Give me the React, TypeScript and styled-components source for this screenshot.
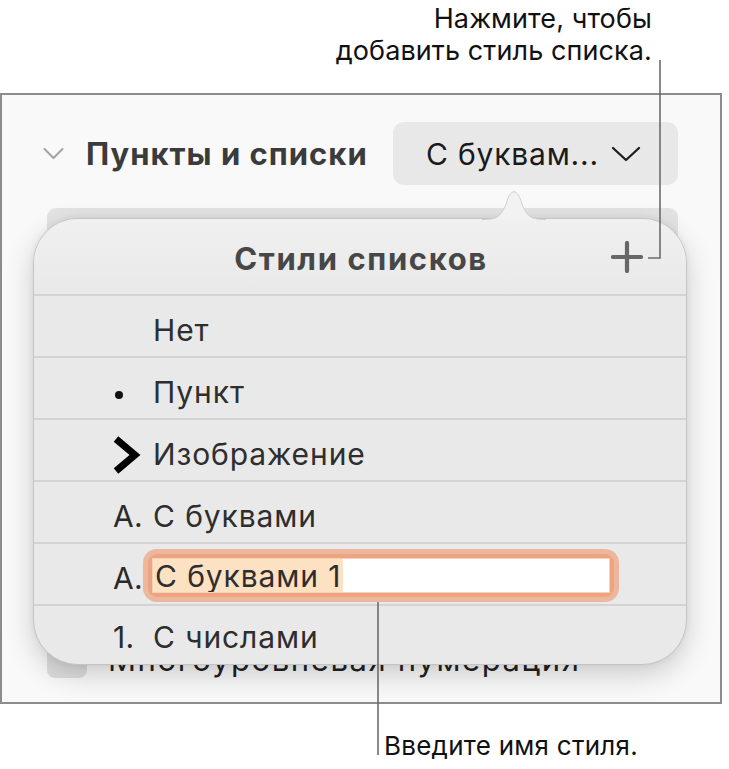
import React from "react";
import styled, { createGlobalStyle } from "styled-components";

const Global = createGlobalStyle`
  html, body { margin: 0; padding: 0; background: #ffffff; }
  body { font-family: Inter, "Noto Sans", sans-serif; -webkit-font-smoothing: antialiased; }
  #root { width: 729px; height: 769px; }
`;

const Page = styled.div`
  position: relative;
  width: 729px;
  height: 769px;
  overflow: hidden;
  display: flex;
  flex-direction: column;
`;

const CalloutTop = styled.div`
  height: 93px;
  box-sizing: border-box;
  padding: 3px 77px 0 0;
  text-align: right;
  font-size: 27px;
  line-height: 32px;
  color: #111;
  letter-spacing: 0.1px;
`;

const CalloutBottom = styled.div`
  padding: 26px 0 0 384px;
  font-size: 26px;
  line-height: 32px;
  color: #111;
  letter-spacing: 0.25px;
`;

const Panel = styled.div`
  position: relative;
  width: 722px;
  height: 611px;
  box-sizing: border-box;
  border: 2px solid #8c8c8c;
  background: #f9f9f9;
  display: flex;
  flex-direction: column;
  padding: 27px 0 0 0;
`;

const SectionRow = styled.div`
  display: flex;
  align-items: center;
  height: 63px;
  padding-left: 41px;
`;

const Disclosure = styled.svg`
  width: 21px;
  height: 13px;
  margin-right: 22px;
`;

const SectionTitle = styled.div`
  font-size: 31px;
  font-weight: 700;
  color: #3b3b3b;
  width: 307px;
  letter-spacing: 1px;
`;

const PopupButton = styled.div`
  width: 285px;
  height: 63px;
  box-sizing: border-box;
  border-radius: 11px;
  background: #e8e8e8;
  display: flex;
  align-items: center;
  padding-left: 33px;
  font-size: 30px;
  letter-spacing: 0.8px;
  color: #1a1a1a;
  gap: 12px;
`;

const HiddenControl = styled.div`
  margin: 23px 0 0 45px;
  width: 631px;
  height: 50px;
  border-radius: 9px;
  background: #e3e3e3;
`;

const CheckRow = styled.div`
  display: flex;
  align-items: center;
  margin: 382px 0 0 45px;
  gap: 21px;
  font-size: 31px;
  letter-spacing: 1.6px;
  color: #222;
`;

const CheckBox = styled.div`
  width: 40px;
  height: 38px;
  border-radius: 8px;
  background: #dedede;
`;

const Popover = styled.div`
  position: absolute;
  left: 31px;
  top: 123px;
  width: 654px;
  height: 447px;
  box-sizing: border-box;
  border-radius: 45px;
  background: #e9e9e9;
  border: 1px solid #c4c4c4;
  box-shadow: 0 10px 28px rgba(0, 0, 0, 0.18), 0 0 6px rgba(0, 0, 0, 0.06);
  overflow: hidden;
  display: flex;
  flex-direction: column;
`;

const PopArrow = styled.svg`
  position: absolute;
  left: 480px;
  top: 94px;
  width: 64px;
  height: 31px;
  overflow: visible;
`;

const PopHeader = styled.div`
  height: 75px;
  flex: none;
  display: flex;
  align-items: center;
  justify-content: center;
  position: relative;
  background: linear-gradient(#f0f0f0, #e9e9e9);
`;

const PopTitle = styled.div`
  font-size: 31px;
  font-weight: 700;
  color: #474747;
  letter-spacing: 1.6px;
  margin: 3px 0 0 2px;
`;

const PlusIcon = styled.svg`
  position: absolute;
  right: 43px;
  top: 22px;
  width: 32px;
  height: 32px;
`;

const Row = styled.div`
  flex: none;
  height: 62px;
  box-sizing: border-box;
  border-top: 2px solid #d3d3d3;
  padding: 7px 0 0 79px;
  display: flex;
  align-items: center;
  font-size: 30px;
  letter-spacing: 0.9px;
  color: #2e2e2e;
`;

const LastRow = styled(Row)`
  padding-top: 2px;
`;

const Marker = styled.div`
  width: 40px;
  flex: none;
  display: flex;
  align-items: center;
  letter-spacing: 0.4px;
  color: #2a2a2a;
`;

const Dot = styled.span`
  display: block;
  width: 8px;
  height: 8px;
  border-radius: 50%;
  background: #111;
  margin: 6px 0 0 2px;
`;

const ChevronMark = styled.svg`
  width: 28px;
  height: 38px;
  margin-top: 2px;
`;

const FieldRing = styled.div`
  margin: -4px 0 0 -5px;
  padding: 4px;
  border-radius: 9px;
  background: #eea481;
  box-shadow: 0 0 0 5px rgba(238, 164, 129, 0.72);
`;

const Field = styled.div`
  width: 456px;
  height: 33px;
  background: #fff;
  border: 1px solid #f8d0b8;
  display: flex;
  align-items: center;
  overflow: hidden;
`;

const Selection = styled.span`
  background: #fde1c3;
  height: 100%;
  display: flex;
  align-items: center;
  padding: 0 2px 0 2px;
  color: #2e2e2e;
`;

const Annotations = styled.svg`
  position: absolute;
  left: 0;
  top: 0;
  width: 729px;
  height: 769px;
  pointer-events: none;
`;

export default function App() {
  return (
    <>
      <Global />
      <Page>
        <CalloutTop>
          Нажмите, чтобы
          <br />
          добавить стиль списка.
        </CalloutTop>
        <Panel>
          <SectionRow>
            <Disclosure viewBox="0 0 21 13">
              <path d="M1.5 2 L10.5 11 L19.5 2" fill="none" stroke="#a3a3a3" strokeWidth="2" strokeLinecap="round" strokeLinejoin="round" />
            </Disclosure>
            <SectionTitle>Пункты и списки</SectionTitle>
            <PopupButton>
              <span>С буквам...</span>
              <svg width="30" height="16" viewBox="0 0 30 16">
                <path d="M2 2 L15 14 L28 2" fill="none" stroke="#1e1e1e" strokeWidth="2.3" strokeLinecap="round" strokeLinejoin="round" />
              </svg>
            </PopupButton>
          </SectionRow>
          <HiddenControl />
          <CheckRow>
            <CheckBox />
            <span>Многоуровневая нумерация</span>
          </CheckRow>

          <Popover>
            <PopHeader>
              <PopTitle>Стили списков</PopTitle>
              <PlusIcon viewBox="0 0 32 32">
                <path d="M16 2 V30 M2 16 H30" stroke="#676767" strokeWidth="4.2" strokeLinecap="round" />
              </PlusIcon>
            </PopHeader>
            <Row>
              <Marker />
              Нет
            </Row>
            <Row>
              <Marker>
                <Dot />
              </Marker>
              Пункт
            </Row>
            <Row>
              <Marker>
                <ChevronMark viewBox="0 0 28 38">
                  <path d="M3 3 L22 19 L3 35" fill="none" stroke="#000" strokeWidth="7" strokeLinejoin="miter" />
                </ChevronMark>
              </Marker>
              Изображение
            </Row>
            <Row>
              <Marker>А.</Marker>
              С буквами
            </Row>
            <Row>
              <Marker>А.</Marker>
              <FieldRing>
                <Field>
                  <Selection>С буквами 1</Selection>
                </Field>
              </FieldRing>
            </Row>
            <LastRow>
              <Marker>1.</Marker>
              С числами
            </LastRow>
          </Popover>
          <PopArrow viewBox="0 0 64 31">
            <path d="M0 31 C 14 31 18 29 24 16 C 28 -1 36 -1 40 16 C 46 29 50 31 64 31 Z" fill="#f2f2f2" />
            <path d="M0 30.5 C 14 30.5 18 28.5 24 15.5 C 28 -1.5 36 -1.5 40 15.5 C 46 28.5 50 30.5 64 30.5" fill="none" stroke="#cfcfcf" strokeWidth="1" />
          </PopArrow>
        </Panel>
        <CalloutBottom>Введите имя стиля.</CalloutBottom>
        <Annotations viewBox="0 0 729 769">
          <path d="M660 60 V258 H648" fill="none" stroke="#6c6c6c" strokeWidth="1.6" />
          <path d="M378 602 V755" fill="none" stroke="#6c6c6c" strokeWidth="1.6" />
        </Annotations>
      </Page>
    </>
  );
}
